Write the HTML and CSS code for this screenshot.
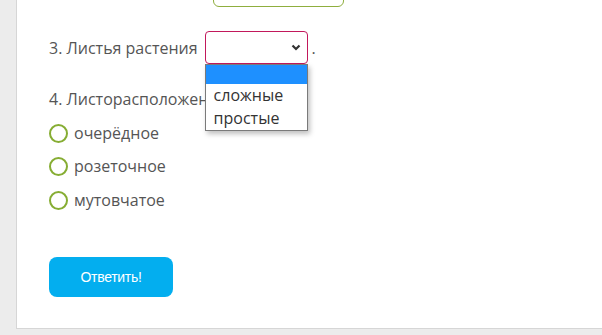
FILE: index.html
```html
<!DOCTYPE html>
<html lang="ru">
<head>
    <meta charset="UTF-8">
    <meta name="viewport" content="width=device-width, initial-scale=1.0">
    <title>Тест</title>
    <link rel="stylesheet" href="styles.css">
</head>
<body>
    <div class="card">
        <div class="question q-top">
            <span class="label-hidden">2. Жилкование листьев</span>
            <input type="text" class="answer-input">
        </div>
        <div class="question q-select">
            <span>3. Листья растения</span>
            <div class="select-wrap">
                <div class="select-box">
                    <svg class="chevron" width="10" height="7" viewBox="0 0 10 7"><path d="M1.5 1.5 L5 5 L8.5 1.5" fill="none" stroke="#333" stroke-width="2.2"/></svg>
                </div>
                <div class="dropdown">
                    <div class="option selected"></div>
                    <div class="option">сложные</div>
                    <div class="option">простые</div>
                </div>
            </div>
            <span class="dot">.</span>
        </div>
        <div class="question q-radio">
            <p class="title">4. Листорасположение</p>
            <label class="radio"><span class="circle"></span>очерёдное</label>
            <label class="radio"><span class="circle"></span>розеточное</label>
            <label class="radio"><span class="circle"></span>мутовчатое</label>
        </div>
        <button class="submit">Ответить!</button>
    </div>
</body>
</html>
```

FILE: styles.css
```css
body {
    margin: 0;
    padding: 0 0 6px 16px;
    background-color: #ececec;
    font-family: "Open Sans", sans-serif;
    font-size: 16px;
    color: #555;
}
.card {
    background-color: #fff;
    border-left: 1px solid #d6d6d6;
    border-bottom: 1px solid #d6d6d6;
    padding: 1px 0 31px 32px;
    margin-top: -26px;
}
.q-top {
    display: flex;
    align-items: center;
    height: 32px;
}
.label-hidden {
    width: 164px;
    visibility: hidden;
}
.answer-input {
    width: 131px;
    height: 32px;
    box-sizing: border-box;
    border: 1px solid #8fae3e;
    border-radius: 6px;
    padding: 0;
}
.q-select {
    display: flex;
    align-items: center;
    margin-top: 24px;
    height: 33px;
}
.select-wrap {
    position: relative;
    margin-left: 7px;
}
.select-box {
    width: 103px;
    height: 33px;
    box-sizing: border-box;
    border: 1px solid #c2185b;
    border-radius: 4px;
    display: flex;
    align-items: center;
    justify-content: flex-end;
    padding-right: 6px;
}
.dot {
    margin-left: 4px;
}
.dropdown {
    position: absolute;
    left: 0;
    top: 33px;
    width: 103px;
    box-sizing: border-box;
    border: 1px solid #7a7a7a;
    background-color: #fff;
    box-shadow: 2px 3px 5px rgba(0, 0, 0, 0.25);
    font-size: 16px;
    color: #333;
    z-index: 2;
}
.option {
    height: 23px;
    line-height: 23px;
    padding-left: 8px;
}
.option.selected {
    height: 19px;
    background-color: #1e90ff;
}
.q-radio .title {
    margin: 24px 0 0;
    line-height: 22px;
}
.radio {
    display: flex;
    align-items: center;
    height: 22px;
    margin-top: 11px;
}
.radio:first-of-type {
    margin-top: 12px;
}
.radio:last-of-type {
    margin-top: 12px;
}
.circle {
    width: 19px;
    height: 19px;
    box-sizing: border-box;
    border: 2px solid #86ad33;
    border-radius: 50%;
    margin-right: 6px;
}
.submit {
    display: block;
    margin-top: 46px;
    width: 124px;
    height: 40px;
    background-color: #03aeef;
    color: #fff;
    border: none;
    border-radius: 8px;
    font-family: "Liberation Sans", Arial, sans-serif;
    font-size: 14px;
    letter-spacing: -0.3px;
}
```
